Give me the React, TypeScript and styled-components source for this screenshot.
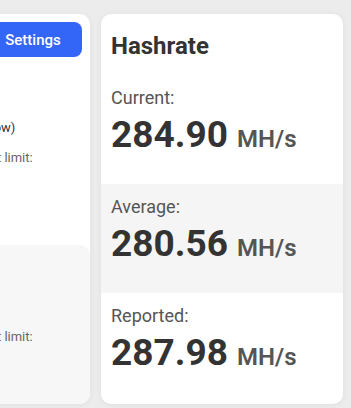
import React from "react";
import styled, { createGlobalStyle } from "styled-components";

const Global = createGlobalStyle`
  html, body { margin: 0; padding: 0; background: #ececec; overflow: hidden; }
  body { font-family: Roboto, "Liberation Sans", sans-serif; }
`;

const Page = styled.div`
  width: 351px;
  height: 408px;
  box-sizing: border-box;
  padding: 14px 8px 4px 0;
  overflow: hidden;
`;

const Row = styled.div`
  display: flex;
  gap: 11px;
  height: 100%;
  margin-left: -180px;
`;

const Card = styled.div`
  background: #ffffff;
  border-radius: 10px;
  box-shadow: 0 1px 6px rgba(0, 0, 0, 0.06);
  display: flex;
  flex-direction: column;
  overflow: hidden;
`;

const LeftCard = styled(Card)`
  flex: 0 0 270px;
`;

const RightCard = styled(Card)`
  flex: 0 0 242px;
`;

const Header = styled.div`
  display: flex;
  align-items: center;
  justify-content: space-between;
  padding: 8px 8px 8px 16px;
`;

const HeaderTitle = styled.div`
  font-size: 22px;
  font-weight: 700;
  color: #333;
`;

const Button = styled.button`
  height: 35px;
  width: 98px;
  border: none;
  border-radius: 8px;
  background: #3366f6;
  color: #fff;
  font-family: Roboto, "Liberation Sans", sans-serif;
  font-size: 15px;
  font-weight: 500;
`;

const Body = styled.div`
  flex: 1;
  padding: 54px 16px 0 16px;
  display: flex;
  flex-direction: column;
`;

const MainLine = styled.div`
  font-size: 13px;
  line-height: 18px;
  color: #333;
  white-space: nowrap;
  margin-left: -4px;
`;

const SubLine = styled.div`
  font-size: 13px;
  line-height: 15px;
  color: #666;
  margin-top: 13px;
  white-space: nowrap;
`;

const Panel = styled.div`
  height: 159px;
  background: #f7f7f7;
  border-radius: 10px;
  box-sizing: border-box;
  padding: 71px 16px 0 16px;
`;

const Title = styled.h2`
  margin: 0;
  padding: 18px 10px 15px;
  font-size: 24px;
  font-weight: 700;
  color: #333;
  line-height: normal;
`;

const Stat = styled.div<{ $shaded?: boolean }>`
  background: ${(p) => (p.$shaded ? "#f5f5f5" : "transparent")};
  padding: 12px 10px 28px;
  display: flex;
  flex-direction: column;
  gap: 5px;
`;

const Label = styled.div`
  font-size: 18px;
  color: #555;
  line-height: normal;
`;

const Value = styled.div`
  font-size: 37px;
  font-weight: 700;
  color: #333;
  line-height: normal;
  white-space: nowrap;
`;

const Unit = styled.span`
  font-size: 24px;
  font-weight: 600;
  color: #555;
`;

const stats = [
  { label: "Current:", value: "284.90", shaded: false },
  { label: "Average:", value: "280.56", shaded: true },
  { label: "Reported:", value: "287.98", shaded: false },
];

export default function App() {
  return (
    <>
      <Global />
      <Page>
        <Row>
          <LeftCard>
            <Header>
              <HeaderTitle>Miner</HeaderTitle>
              <Button>Settings</Button>
            </Header>
            <Body>
              <MainLine>Efficiency mode: Eco 70% (Low)</MainLine>
              <SubLine>GPU core temperature target limit:</SubLine>
            </Body>
            <Panel>
              <SubLine>GPU core temperature target limit:</SubLine>
            </Panel>
          </LeftCard>
          <RightCard>
            <Title>Hashrate</Title>
            {stats.map((s) => (
              <Stat key={s.label} $shaded={s.shaded}>
                <Label>{s.label}</Label>
                <Value>
                  {s.value} <Unit>MH/s</Unit>
                </Value>
              </Stat>
            ))}
          </RightCard>
        </Row>
      </Page>
    </>
  );
}
